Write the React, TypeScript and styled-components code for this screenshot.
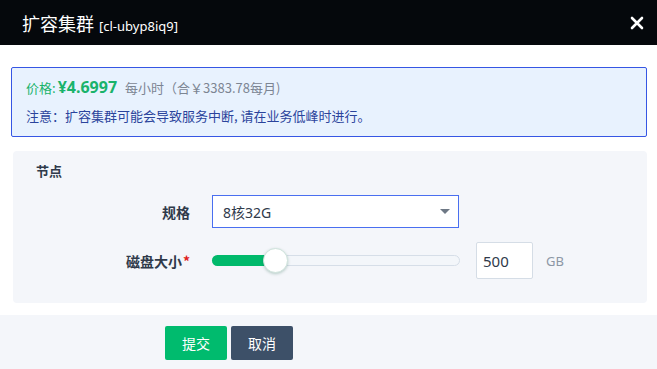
import React, { useState } from "react";
import styled, { createGlobalStyle } from "styled-components";

const GlobalStyle = createGlobalStyle`
  html, body {
    margin: 0;
    padding: 0;
    background: #fff;
    font-family: "Noto Sans", "Noto Sans CJK SC", sans-serif;
  }
  * {
    box-sizing: border-box;
  }
`;

const Dialog = styled.div`
  width: 657px;
  height: 369px;
  display: flex;
  flex-direction: column;
  background: #fff;
  overflow: hidden;
`;

const Header = styled.div`
  height: 45px;
  background: #05080c;
  display: flex;
  align-items: center;
  justify-content: space-between;
  padding: 0 12px 0 22px;
  color: #fff;
`;

const Title = styled.div`
  font-size: 18px;
  font-weight: 400;
  font-family: "Noto Sans CJK SC", sans-serif;
  display: flex;
  align-items: baseline;
  gap: 5px;
`;

const ClusterId = styled.span`
  font-family: "Noto Sans", "Noto Sans CJK SC", sans-serif;
  font-size: 13px;
`;

const CloseBtn = styled.button`
  background: none;
  border: none;
  padding: 0;
  width: 16px;
  height: 16px;
  display: flex;
  align-items: center;
  justify-content: center;
  cursor: pointer;
`;

const Body = styled.div`
  padding: 22px 10px 12px 11px;
  display: flex;
  flex-direction: column;
  gap: 14px;
`;

const Alert = styled.div`
  height: 70px;
  border: 1px solid #3656e4;
  border-radius: 2px;
  background: #e8f2fe;
  padding: 8px 14px 0 14px;
  display: flex;
  flex-direction: column;
  gap: 8px;
  font-family: "Noto Sans CJK SC", sans-serif;
`;

const PriceLine = styled.div`
  height: 22px;
  line-height: 22px;
  font-size: 13px;
  white-space: nowrap;
`;

const PriceLabel = styled.span`
  color: #19b36b;
`;

const PriceValue = styled.span`
  color: #19b36b;
  font-family: "Noto Sans", sans-serif;
  font-size: 16px;
  font-weight: 700;
  margin-left: 2px;
  margin-right: 8px;
`;

const PriceNote = styled.span`
  color: #7c8593;
`;

const Notice = styled.div`
  color: #2b449c;
  font-size: 13px;
  height: 20px;
  line-height: 20px;
`;

const Panel = styled.div`
  margin-left: 2px;
  height: 152px;
  background: #f4f6fa;
  border-radius: 4px;
  padding: 10px 0 0 0;
`;

const SectionTitle = styled.div`
  font-family: "Noto Sans CJK SC", sans-serif;
  font-size: 13px;
  font-weight: 700;
  color: #2f3a4a;
  padding-left: 23px;
  height: 20px;
  line-height: 20px;
`;

const FormRow = styled.div<{ top: number; height: number }>`
  display: grid;
  grid-template-columns: 177px 1fr;
  column-gap: 22px;
  align-items: center;
  margin-top: ${({ top }) => top}px;
  height: ${({ height }) => height}px;
`;

const Label = styled.div`
  text-align: right;
  font-family: "Noto Sans CJK SC", sans-serif;
  font-size: 14px;
  font-weight: 700;
  color: #2f3a4a;
`;

const Required = styled.span`
  color: #e02020;
  margin-left: 1px;
`;

const Select = styled.div`
  width: 247px;
  height: 33px;
  background: #fff;
  border: 1px solid #4a6ff0;
  display: flex;
  align-items: center;
  justify-content: space-between;
  padding: 0 8px 0 10px;
  font-family: "Noto Sans", "Noto Sans CJK SC", sans-serif;
  font-size: 14px;
  color: #2f3a4a;
`;

const Caret = styled.span`
  width: 0;
  height: 0;
  border-left: 5px solid transparent;
  border-right: 5px solid transparent;
  border-top: 5px solid #6e7885;
`;

const SliderGroup = styled.div`
  display: flex;
  align-items: center;
`;

const Track = styled.div`
  position: relative;
  width: 248px;
  height: 11px;
  border: 1px solid #d6dee8;
  border-radius: 6px;
  background: #f3f6fa;
`;

const Fill = styled.div`
  position: absolute;
  left: -1px;
  top: -1px;
  bottom: -1px;
  background: #00b96b;
  border-radius: 6px 0 0 6px;
`;

const Thumb = styled.div`
  position: absolute;
  top: 50%;
  width: 25px;
  height: 25px;
  margin-left: -12px;
  margin-top: -12.5px;
  border-radius: 50%;
  background: #fff;
  border: 1px solid #cfe3dc;
  box-shadow: 0 1px 3px rgba(0, 80, 50, 0.25);
`;

const SizeInput = styled.input`
  width: 57px;
  height: 37px;
  margin-left: 16px;
  border: 1px solid #d5dde6;
  border-radius: 2px;
  background: #fff;
  padding: 0 6px;
  font-family: "Noto Sans", sans-serif;
  font-size: 15px;
  color: #2f3a4a;
  outline: none;
`;

const Unit = styled.span`
  margin-left: 13px;
  font-family: "Noto Sans", sans-serif;
  font-size: 13px;
  color: #8c97a5;
`;

const Footer = styled.div`
  flex: 1;
  background: #f4f6fa;
  padding: 11px 0 0 165px;
  display: flex;
  gap: 4px;
  align-items: flex-start;
`;

const Button = styled.button<{ bg: string }>`
  width: 62px;
  height: 34px;
  border: none;
  border-radius: 2px;
  background: ${({ bg }) => bg};
  color: #fff;
  font-family: "Noto Sans CJK SC", sans-serif;
  font-size: 14px;
  cursor: pointer;
`;

const App = () => {
  const [size, setSize] = useState("500");
  const ratio = 0.25;

  return (
    <>
      <GlobalStyle />
      <Dialog>
        <Header>
          <Title>
            扩容集群 <ClusterId>[cl-ubyp8iq9]</ClusterId>
          </Title>
          <CloseBtn aria-label="close">
            <svg width={14} height={14} viewBox="0 0 14 14">
              <path
                d="M2 2 L12 12 M12 2 L2 12"
                stroke="#fff"
                strokeWidth={2.6}
                strokeLinecap="round"
              />
            </svg>
          </CloseBtn>
        </Header>
        <Body>
          <Alert>
            <PriceLine>
              <PriceLabel>价格:</PriceLabel>
              <PriceValue>¥4.6997</PriceValue>
              <PriceNote>每小时（合￥3383.78每月)</PriceNote>
            </PriceLine>
            <Notice>注意：扩容集群可能会导致服务中断, 请在业务低峰时进行。</Notice>
          </Alert>
          <Panel>
            <SectionTitle>节点</SectionTitle>
            <FormRow top={14} height={33}>
              <Label>规格</Label>
              <Select>
                8核32G
                <Caret />
              </Select>
            </FormRow>
            <FormRow top={14} height={37}>
              <Label>
                磁盘大小<Required>*</Required>
              </Label>
              <SliderGroup>
                <Track>
                  <Fill style={{ width: `${ratio * 100}%` }} />
                  <Thumb style={{ left: `${ratio * 100}%` }} />
                </Track>
                <SizeInput value={size} onChange={(e) => setSize(e.target.value)} />
                <Unit>GB</Unit>
              </SliderGroup>
            </FormRow>
          </Panel>
        </Body>
        <Footer>
          <Button bg="#00bb6e">提交</Button>
          <Button bg="#3d5068">取消</Button>
        </Footer>
      </Dialog>
    </>
  );
};

export default App;
